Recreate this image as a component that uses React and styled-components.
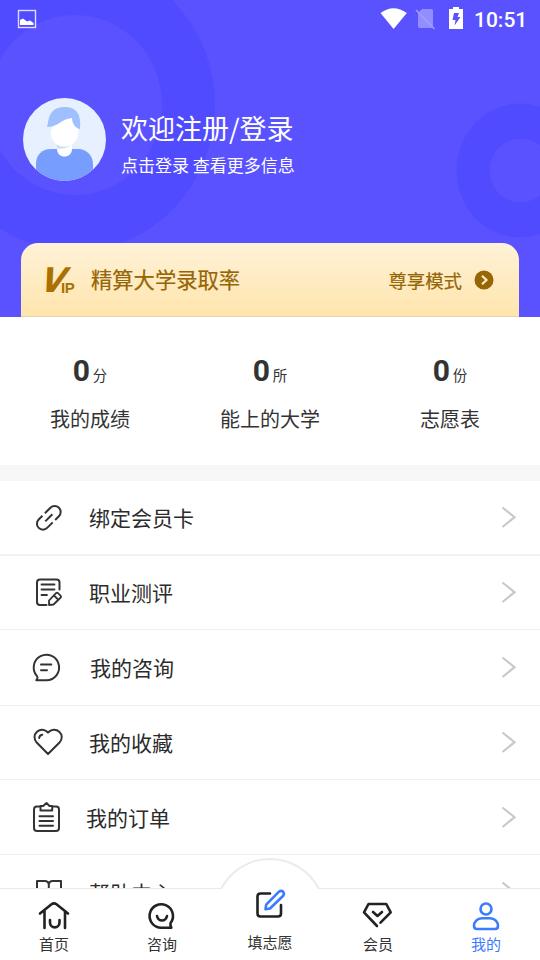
import React from 'react'
import styled, { createGlobalStyle } from 'styled-components'

const GlobalStyle = createGlobalStyle`
  * {
    box-sizing: border-box;
  }
  body {
    margin: 0;
    background: #fff;
    font-family: Roboto, 'Noto Sans CJK SC', sans-serif;
    color: #333;
  }
  svg {
    display: block;
    flex-shrink: 0;
  }
`

const Screen = styled.div`
  display: flex;
  flex-direction: column;
  width: 540px;
  height: 960px;
  overflow: hidden;
  background: #fff;
`

const Header = styled.header`
  position: relative;
  display: flex;
  flex-direction: column;
  flex-shrink: 0;
  height: 317px;
  background: #5a52ff;
  color: #fff;
`

const Rings = styled.svg`
  position: absolute;
  top: 0;
  left: 0;
`

const StatusBar = styled.div`
  position: relative;
  display: flex;
  justify-content: space-between;
  height: 38px;
  padding: 0 13px 0 17px;
`

const Clock = styled.span`
  width: 52px;
  margin-left: -1px;
  margin-right: 1px;
  font: 500 21px/38px Roboto, sans-serif;
  padding-top: 1px;
`

const StatusIcons = styled.div`
  display: flex;
`

const Profile = styled.div`
  position: relative;
  display: flex;
  padding: 60px 23px 0;
  height: 205px;
`

const Greeting = styled.div`
  display: flex;
  flex-direction: column;
  padding: 10px 0 0 15px;
  font-family: 'Noto Sans CJK SC', sans-serif;
`

const Welcome = styled.div`
  font-size: 27px;
  line-height: 40px;
`

const Hint = styled.div`
  margin-top: 6px;
  font-size: 17px;
  line-height: 22px;
`

const VipCard = styled.div`
  position: relative;
  display: flex;
  align-items: center;
  height: 74px;
  margin: 0 21px;
  padding: 0 25px 0 24px;
  border-radius: 17px 17px 0 0;
  border-bottom: 1px solid #e2d3b4;
  background: linear-gradient(#fff2d8, #ffe5ad);
  color: #966506;
  font-family: 'Noto Sans CJK SC', sans-serif;
`

const VipMark = styled.div`
  display: flex;
  align-items: flex-end;
  width: 46px;
  height: 28px;
  color: #aa7100;
  font-family: 'DejaVu Sans', sans-serif;
  font-weight: bold;
`

const BigV = styled.span`
  width: 24px;
  margin-left: -8px;
  font-size: 34px;
  line-height: 28px;
  transform: skewX(-21deg) scaleX(0.92);
  transform-origin: 0 100%;
`

const SmallIP = styled.span`
  font: bold 15px/12px 'Liberation Sans', sans-serif;
  letter-spacing: -0.5px;
`

const VipTitle = styled.div`
  flex: 1;
  padding-bottom: 2px;
  font-size: 21.3px;
  -webkit-text-stroke: 0.2px currentColor;
`

const VipMode = styled.div`
  margin-right: 12px;
  font-size: 18.4px;
  -webkit-text-stroke: 0.2px currentColor;
`

const Stats = styled.section`
  display: flex;
  flex-shrink: 0;
  height: 164px;
  padding-top: 32px;
  border-bottom: 16px solid #f7f7f7;
`

const Stat = styled.div`
  flex: 1;
  display: flex;
  flex-direction: column;
  align-items: center;
  font-family: 'Noto Sans CJK SC', sans-serif;
`

const StatValue = styled.div`
  display: flex;
  align-items: baseline;
  gap: 3px;
  height: 44px;
  font-size: 14.5px;
  line-height: 44px;

  b {
    font-family: Roboto, sans-serif;
    font-size: 30px;
  }
`

const StatLabel = styled.div`
  margin-top: 10px;
  font-size: 20px;
  line-height: 32px;
`

const List = styled.main`
  flex: 1;
  min-height: 0;
  margin-top: -1px;
  padding-top: 1px;
  overflow: hidden;
`

const Row = styled.div`
  display: flex;
  height: ${p => 75 + (p.$extra || 0)}px;
  margin-bottom: ${p => -(p.$extra || 0)}px;
  padding: 0 23px 0 31px;
  border-bottom: ${p => p.$line || 1}px solid #f1f1f1;

  &:first-child {
    margin-top: -1px;
  }

  > svg {
    margin-top: 20px;
  }
`

const RowLabel = styled.span`
  flex: 1;
  padding-left: ${p => p.$indent}px;
  font: 21px/75px 'Noto Sans CJK SC', sans-serif;
  color: #2b2b2b;
`

const TabBar = styled.nav`
  position: relative;
  display: flex;
  flex-shrink: 0;
  height: 72px;
  border-top: 1px solid #e9e9e9;
  background: #fff;
`

const Bump = styled.svg`
  position: absolute;
  top: -31px;
  left: 216px;
`

const Tab = styled.div`
  position: relative;
  flex: 1;
  display: flex;
  flex-direction: column;
  align-items: center;
  padding-top: 9px;
  margin-top: ${p => (p.$raised ? -11 : 0)}px;
  color: ${p => (p.$active ? '#3b7bff' : '#333')};
  font: 15px/22px 'Noto Sans CJK SC', sans-serif;

  span {
    margin-top: ${p => (p.$raised ? 10 : 1)}px;
  }
`

const Icon = ({ children, width = 2 }) => (
  <svg
    width="34"
    height="34"
    fill="none"
    stroke="currentColor"
    strokeWidth={width}
    strokeLinecap="round"
    strokeLinejoin="round"
  >
    {children}
  </svg>
)

const Avatar = () => (
  <svg width="83" height="83" viewBox="0 0 83 83">
    <defs>
      <clipPath id="face">
        <circle cx="41.5" cy="41.5" r="41.5" />
      </clipPath>
    </defs>
    <g clipPath="url(#face)">
      <rect width="83" height="83" fill="#e6f0ff" />
      <path d="M13 83V66C13 57 19 51 28 51H55C64 51 70 58 70 66V83Z" fill="#779dff" />
      <path d="M34 43V51C34 61 49 61 49 51V43Z" fill="#fff" />
      <path d="M34 46H49C46 49.500 40 51.500 34 50.500Z" fill="#d2dff1" />
      <path d="M27.500 33C27.500 54 55.500 54 55.500 33L52 19L35 19Z" fill="#fff" />
      <path d="M24 29C25 26 25 21 27 17C30 11 35 9 42 9C53 9 57 16 57 24C57.500 26 57 28 57 31C52 30 49 25 49 20C38 21 35 29 24 29Z" fill="#9fc0ff" />
    </g>
  </svg>
)

const rows = [
  {
    label: '绑定会员卡',
    indent: 24,
    line: 2,
    extra: 1,
    icon: (
      <g transform="translate(17.800 17.800) rotate(-45)">
        <path d="M-3 -6H-8.300A6 6 0 0 0 -8.300 6H-.5M3 6H8.300A6 6 0 0 0 8.300 -6H.5M-5 0H5" strokeLinecap="butt" />
      </g>
    ),
  },
  {
    label: '职业测评',
    indent: 24,
    icon: (
      <>
        <path d="M15.500 30H9Q6 30 6 27V7.500Q6 4.500 9 4.500H25.500Q28.500 4.500 28.500 7.500V14.500" />
        <path
          d="M10.500 9.500H23.500M10.500 14.500H23.500M10.500 20H16M18 30V25.500L25 18.200Q26 17.300 27 18.200L29.700 20.800Q30.500 21.700 29.700 22.500L22.500 29.500ZM23 20.500L27.200 24.700"
          strokeWidth="1.800"
        />
      </>
    ),
  },
  {
    label: '我的咨询',
    indent: 25,
    extra: 1,
    icon: <path d="M5.300 30.200H15.500A12.700 12.700 0 1 0 5.800 25.800Q7 27.200 6.300 28.500ZM10 14.500H20.300M10 20.300H16" />,
  },
  {
    label: '我的收藏',
    indent: 24,
    icon: (
      <path d="M17 29L5.700 17.500C2.600 14 2.900 9.500 6 6.700C9.300 3.900 14 4.200 17 7.500C20 4.200 25 3.900 28.200 6.700C31.500 9.600 31.600 14 28.500 17.500ZM8.200 13Q8.400 10.200 11.300 9.700" />
    ),
  },
  {
    label: '我的订单',
    indent: 21,
    icon: (
      <path d="M8.500 6.500H6Q3 6.500 3 9.500V28Q3 31 6 31H25Q28 31 28 28V9.500Q28 6.500 25 6.500H22M9.500 10.500V6H12.200L15.500 3L18.500 6H21.200V10.500ZM8.500 16.300H22M8.500 21H22M8.500 25.700H22" />
    ),
  },
  {
    label: '帮助中心',
    indent: 24,
    icon: <path d="M17.800 9Q17 6 14 6H6V27H13Q17.800 27 17.800 30ZM17.800 9Q18.500 6 21.500 6H30V27H22.500Q17.800 27 17.800 30" />,
  },
]

const stats = [
  ['分', '我的成绩'],
  ['所', '能上的大学'],
  ['份', '志愿表'],
]

const tabs = [
  {
    label: '首页',
    icon: (
      <g stroke="#222">
        <path d="M3 15.500L14.500 6.200Q17 4.500 19.500 6.200L31 15.500M7.500 13V30M28 13V30" />
        <path d="M13 22V24.500C13 31 22.500 31 22.500 24.500V22" />
      </g>
    ),
  },
  {
    label: '咨询',
    icon: (
      <path d="M26.300 29.700H16.500A11.700 11.700 0 1 1 25.500 25.200V27.500ZM12 18C13.500 24 20.500 24 22 18" stroke="#222" />
    ),
  },
  {
    label: '填志愿',
    raised: true,
    icon: (
      <>
        <path d="M17 6.500H7.500Q4.500 6.500 4.500 9.500V26.500Q4.500 29.500 7.500 29.500H25Q28 29.500 28 26.500V18" stroke="#222" />
        <path d="M12.500 22.200L13.200 17.700L26 4.700Q28 3 30 4.500Q31.700 6.500 30.200 8.700L17 21.500Z" stroke="#3b7bff" />
      </>
    ),
  },
  {
    label: '会员',
    icon: <path d="M16 28L3 14.300L7.500 6H25.300L29.700 14.300L19.500 24.700M12 14L16.500 18L21 14" stroke="#222" />,
  },
  {
    label: '我的',
    active: true,
    icon: (
      <>
        <circle cx="17" cy="11" r="5.500" />
        <path d="M13 20.300H21C26 20.300 29 24 29 28Q29 31 26 31H8Q5 31 5 28C5 24 8 20.300 13 20.300Z" />
      </>
    ),
  },
]

export default function App() {
  return (
    <>
      <GlobalStyle />
      <Screen>
        <Header>
          <Rings width="540" height="317">
            <g fill="#514bff">
              <ellipse cx="75" cy="105" rx="140" ry="146" />
              <ellipse cx="520.500" cy="170.500" rx="64" ry="67" />
            </g>
            <g fill="#5a52ff">
              <ellipse cx="75" cy="105" rx="87" ry="90" />
              <ellipse cx="520.500" cy="170.500" rx="31" ry="32" />
            </g>
          </Rings>

          <StatusBar>
            <svg width="20" height="38">
              <rect x="1.500" y="10.500" width="17" height="17" fill="none" stroke="#dedcff" strokeWidth="1.400" />
              <path d="M3 25V20L6 18.500L10 21.500L13 20.500L16.500 23V25Z" fill="#fff" />
            </svg>
            <StatusIcons>
              <svg width="95" height="38" fill="#fff">
                <path d="M.5 13Q13.500 3.500 26.800 13L13.600 29Z" />
                <path d="M42 9H51.500Q53 9 53 10.500V26.500Q53 28 51.500 28H40Q38 28 38 26.500V13Z" opacity=".35" />
                <path d="M36 10L54.500 29" stroke="#a29dff" strokeWidth="1.500" />
                <path d="M73 7H79V9H83V29H69V9H73Z" />
                <path d="M74 13H79L77.500 17H80.500L74.500 25.500L75.500 20H72.500Z" fill="#5a52ff" />
              </svg>
              <Clock>10:51</Clock>
            </StatusIcons>
          </StatusBar>

          <Profile>
            <Avatar />
            <Greeting>
              <Welcome>欢迎注册/登录</Welcome>
              <Hint>点击登录 查看更多信息</Hint>
            </Greeting>
          </Profile>

          <VipCard>
            <VipMark>
              <BigV>V</BigV>
              <SmallIP>IP</SmallIP>
            </VipMark>
            <VipTitle>精算大学录取率</VipTitle>
            <VipMode>尊享模式</VipMode>
            <svg width="20" height="20">
              <circle cx="10" cy="10" r="9.500" fill="#966506" />
              <path d="M8 5.700L12.500 10L8 14.300" fill="none" stroke="#ffedc8" strokeWidth="2.200" />
            </svg>
          </VipCard>
        </Header>

        <Stats>
          {stats.map(([unit, label]) => (
            <Stat key={label}>
              <StatValue>
                <b>0</b>
                {unit}
              </StatValue>
              <StatLabel>{label}</StatLabel>
            </Stat>
          ))}
        </Stats>

        <List>
          {rows.map(row => (
            <Row key={row.label} $line={row.line} $extra={row.extra}>
              <Icon>{row.icon}</Icon>
              <RowLabel $indent={row.indent}>{row.label}</RowLabel>
              <svg width="17" height="34" fill="none" stroke="#c9c9c9" strokeWidth="2.200">
                <path d="M2.500 7.500L14.500 17.200L2.500 27" />
              </svg>
            </Row>
          ))}
        </List>

        <TabBar>
          <Bump width="108" height="34">
            <path d="M5 31A55 55 0 0 1 103 31V34H5Z" fill="#fff" />
            <path d="M5 31A55 55 0 0 1 103 31" fill="none" stroke="#ebebeb" strokeWidth="2" />
          </Bump>
          {tabs.map(tab => (
            <Tab key={tab.label} $active={tab.active} $raised={tab.raised}>
              <Icon width={2.6}>{tab.icon}</Icon>
              <span>{tab.label}</span>
            </Tab>
          ))}
        </TabBar>
      </Screen>
    </>
  )
}
